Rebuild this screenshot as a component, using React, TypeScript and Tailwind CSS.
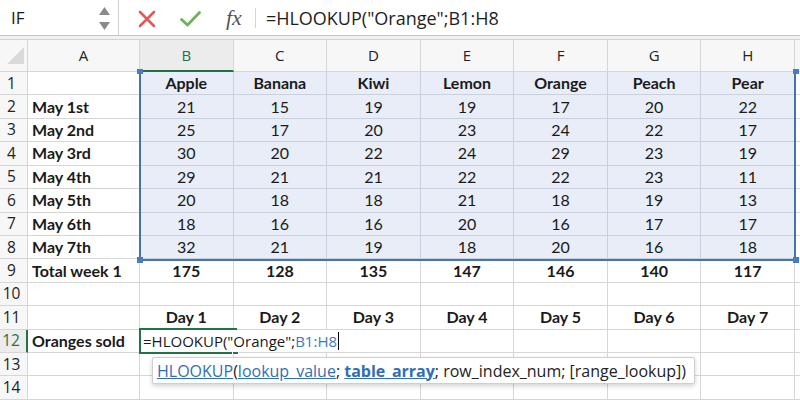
import React from "react";

const cols = ["A", "B", "C", "D", "E", "F", "G", "H"];

type Row = { label: string; vals: string[]; bold?: boolean };

const rows: Row[] = [
  { label: "", vals: ["Apple", "Banana", "Kiwi", "Lemon", "Orange", "Peach", "Pear"], bold: true },
  { label: "May 1st", vals: ["21", "15", "19", "19", "17", "20", "22"] },
  { label: "May 2nd", vals: ["25", "17", "20", "23", "24", "22", "17"] },
  { label: "May 3rd", vals: ["30", "20", "22", "24", "29", "23", "19"] },
  { label: "May 4th", vals: ["29", "21", "21", "22", "22", "23", "11"] },
  { label: "May 5th", vals: ["20", "18", "18", "21", "18", "19", "13"] },
  { label: "May 6th", vals: ["18", "16", "16", "20", "16", "17", "17"] },
  { label: "May 7th", vals: ["32", "21", "19", "18", "20", "16", "18"] },
  { label: "Total week 1", vals: ["175", "128", "135", "147", "146", "140", "117"], bold: true },
  { label: "", vals: ["", "", "", "", "", "", ""] },
  { label: "", vals: ["Day 1", "Day 2", "Day 3", "Day 4", "Day 5", "Day 6", "Day 7"], bold: true },
  { label: "Oranges sold", vals: ["", "", "", "", "", "", ""] },
  { label: "", vals: ["", "", "", "", "", "", ""] },
  { label: "", vals: ["", "", "", "", "", "", ""] },
];

const ui = { fontFamily: '"Open Sans", "Noto Sans", sans-serif' };
const cell = { fontFamily: 'Lato, "Open Sans", sans-serif' };

export default function App() {
  return (
    <div className="w-[800px] h-[400px] overflow-hidden bg-white relative text-[#1a1a1a]">
      {/* Formula bar */}
      <div className="flex h-[36px] items-center border-b border-[#c4c4c4] bg-white" style={ui}>
        <div className="w-[119px] h-full flex items-center justify-between border-r border-[#d0d0d0] pl-[11px] pr-[8px]">
          <span className="text-[17px] leading-none">IF</span>
          <div className="flex flex-col items-center gap-[7px] pt-[1px]">
            <svg width="11" height="8" viewBox="0 0 11 8"><path d="M5.5 0 L11 8 L0 8 Z" fill="#8a8a8a" /></svg>
            <svg width="11" height="8" viewBox="0 0 11 8"><path d="M0 0 L11 0 L5.5 8 Z" fill="#8a8a8a" /></svg>
          </div>
        </div>
        <div className="w-[19px]" />
        <svg width="18" height="18" viewBox="0 0 18 18" className="mt-[2px]">
          <path d="M2 2 L16 16 M16 2 L2 16" stroke="#e0585b" strokeWidth="2.6" strokeLinecap="round" />
        </svg>
        <div className="w-[24px]" />
        <svg width="21" height="16" viewBox="0 0 21 16" className="mt-[2px]">
          <path d="M1.5 8.5 L7.5 14 L19.5 1.5" stroke="#6cb35a" strokeWidth="2.8" fill="none" strokeLinecap="round" strokeLinejoin="round" />
        </svg>
        <div className="w-[25px]" />
        <span className="italic text-[22px] leading-none text-[#555]" style={{ fontFamily: '"Liberation Serif", "DejaVu Serif", serif' }}>
          fx
        </span>
        <div className="w-[13px]" />
        <div className="w-px h-[20px] bg-[#d4d4d4]" />
        <div className="w-[10px]" />
        <span className="text-[18px] leading-none text-[#1e1e1e] mt-[1px]">=HLOOKUP("Orange";B1:H8</span>
      </div>
      {/* band */}
      <div className="h-[4px] bg-[#f1f1f1] border-b border-[#d3d3d3]" />

      {/* grid */}
      <div className="relative">
        <div className="grid grid-cols-[28px_112px_repeat(7,93.57px)_1fr] grid-rows-[32px_repeat(14,23.43px)]">
          {/* header row */}
          <div className="relative border-r border-b border-[#d6d6d6] bg-[#f7f7f7]">
            <svg width="17" height="17" viewBox="0 0 17 17" className="absolute left-[7px] top-[7px]">
              <path d="M17 0 L17 17 L0 17 Z" fill="#dadada" />
            </svg>
          </div>
          {cols.map((c) =>
            c === "B" ? (
              <div
                key={c}
                className="flex items-center justify-center border-r border-b-2 border-r-[#d6d6d6] border-b-[#217346] bg-[#ececec] text-[15px] text-[#217346]"
                style={ui}
              >
                {c}
              </div>
            ) : (
              <div
                key={c}
                className="flex items-center justify-center border-r border-b border-[#d6d6d6] bg-[#f7f7f7] text-[15px] text-[#222]"
                style={ui}
              >
                {c}
              </div>
            )
          )}
          <div className="border-b border-[#d6d6d6] bg-[#f7f7f7]" />

          {rows.map((r, i) => {
            const n = i + 1;
            const inSel = n <= 8;
            const isActiveRow = n === 12;
            return (
              <React.Fragment key={n}>
                {isActiveRow ? (
                  <div
                    className="flex items-center justify-center pr-[4px] border-r-2 border-b border-r-[#217346] border-b-[#d6d6d6] bg-[#ececec] text-[15.5px] text-[#217346]"
                    style={ui}
                  >
                    {n}
                  </div>
                ) : (
                  <div
                    className="flex items-center justify-center pr-[4px] border-r border-b border-[#d6d6d6] bg-[#f7f7f7] text-[15.5px] text-[#222]"
                    style={ui}
                  >
                    {n}
                  </div>
                )}
                <div
                  className="flex items-center pl-[4px] border-r border-b border-[#d6d6d6] text-[16px] font-bold whitespace-nowrap overflow-hidden"
                  style={cell}
                >
                  {r.label}
                </div>
                {r.vals.map((v, j) => (
                  <div
                    key={j}
                    className={
                      inSel
                        ? "flex items-center justify-center border-r border-b border-[#c9d1de] bg-[#e8edf8] text-[16px] " +
                          (r.bold ? "font-bold" : "font-normal")
                        : "flex items-center justify-center border-r border-b border-[#d6d6d6] text-[16px] " +
                          (r.bold ? "font-bold" : "font-normal")
                    }
                    style={cell}
                  >
                    {v}
                  </div>
                ))}
                <div className="border-b border-[#d6d6d6]" />
              </React.Fragment>
            );
          })}
        </div>

        {/* selection range B1:H8 */}
        <div className="absolute left-[139px] top-[31px] w-[657px] h-[190px] border-l-2 border-r-2 border-b-2 border-[#4673ad] pointer-events-none" />
        <div className="absolute left-[137px] top-[29px] w-[6px] h-[5px] bg-[#4a7cc0]" />
        <div className="absolute left-[793px] top-[29px] w-[6px] h-[5px] bg-[#4a7cc0]" />
        <div className="absolute left-[137px] top-[217px] w-[6px] h-[6px] bg-[#4a7cc0]" />
        <div className="absolute left-[793px] top-[217px] w-[6px] h-[6px] bg-[#4a7cc0]" />

        {/* active cell B12 */}
        <div className="absolute left-[139px] top-[288px] w-[98px] h-[26px] border-2 border-[#217346]" />
        <div className="absolute left-[232px] top-[309px] w-[7px] h-[6px] bg-[#217346] border border-white" />
        <div
          className="absolute left-[141px] top-[290px] h-[22px] pl-[2px] pr-[6px] bg-white flex items-center text-[15px] text-[#1a1a1a] whitespace-nowrap"
          style={ui}
        >
          <span>=HLOOKUP("Orange";</span>
          <span className="text-[#3c78c3]">B1:H8</span>
          <span className="inline-block w-px h-[18px] bg-black ml-[1px]" />
        </div>

        {/* tooltip */}
        <div
          className="absolute left-[152px] top-[317px] w-[543px] h-[27px] bg-white border border-[#cfcfcf] rounded-[2px] shadow-[0_2px_5px_rgba(0,0,0,0.18)] flex items-center pl-[4px] text-[16px] text-[#222] whitespace-nowrap"
          style={ui}
        >
          <span className="text-[#2f6fb6] underline">HLOOKUP</span>
          <span>(</span>
          <span className="text-[#2f6fb6] underline">lookup_value</span>
          <span>;&nbsp;</span>
          <span className="text-[#2f6fb6] underline font-bold">table_array</span>
          <span>; row_index_num; [range_lookup])</span>
        </div>
      </div>
    </div>
  );
}
